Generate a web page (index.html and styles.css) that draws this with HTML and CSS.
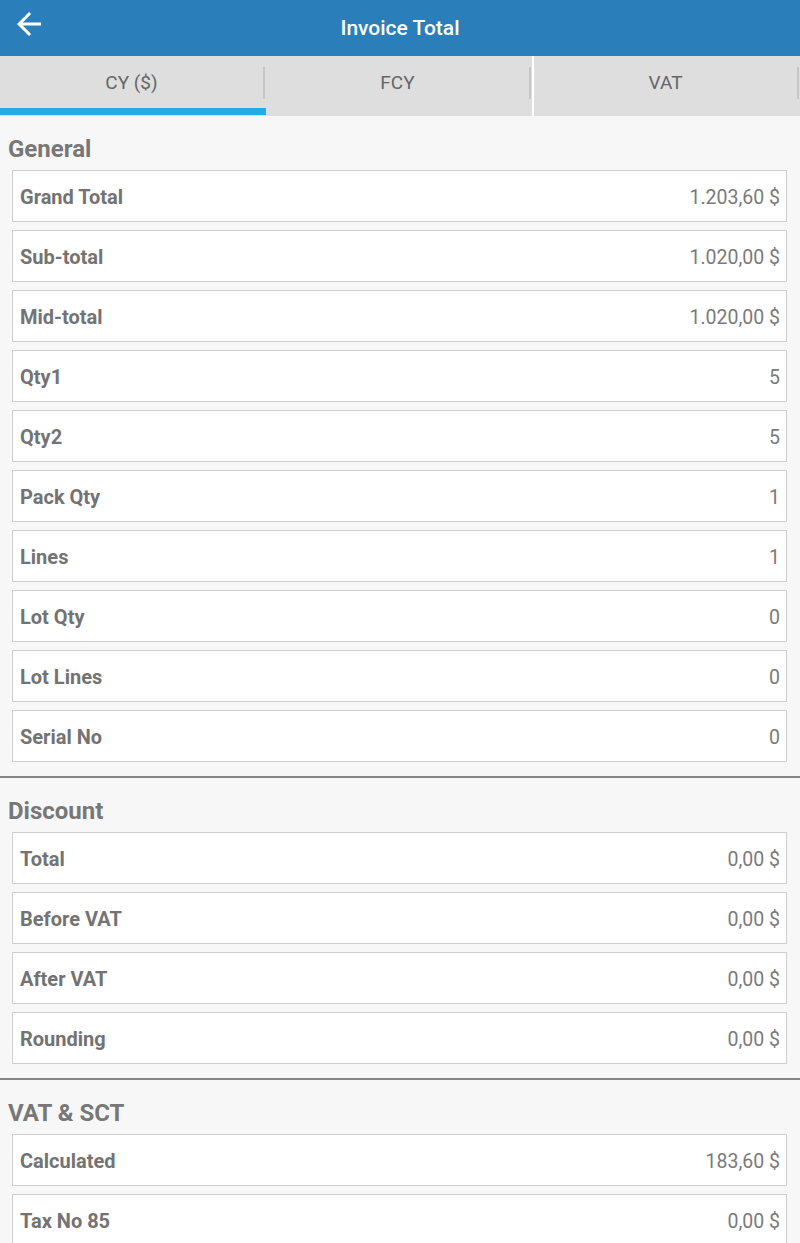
FILE: index.html
```html
<!DOCTYPE html>
<html lang="en">
<head>
<meta charset="utf-8">
<title>Invoice Total</title>
<link rel="stylesheet" href="styles.css">
</head>
<body>
<header class="appbar">
  <svg class="back" viewBox="0 0 24 24" width="36" height="36" aria-hidden="true"><path d="M20 11H7.83l5.59-5.59L12 4l-8 8 8 8 1.41-1.41L7.83 13H20v-2z" fill="#fff"/></svg>
  <h1 class="title">Invoice Total</h1>
</header>
<nav class="tabs">
  <div class="tab active"><div class="tab-body"><span class="tab-label">CY ($)</span><span class="tab-sep"></span></div><div class="tab-ind"></div></div>
  <div class="tab"><div class="tab-body"><span class="tab-label">FCY</span><span class="tab-sep"></span></div><div class="tab-ind"></div></div>
  <div class="tab last"><div class="tab-body"><span class="tab-label">VAT</span><span class="tab-sep"></span></div><div class="tab-ind"></div></div>
</nav>
<main class="content">
  <section class="section">
    <h2 class="section-title">General</h2>
    <div class="rows">
      <div class="row"><span class="label">Grand Total</span><span class="value">1.203,60 $</span></div>
      <div class="row"><span class="label">Sub-total</span><span class="value">1.020,00 $</span></div>
      <div class="row"><span class="label">Mid-total</span><span class="value">1.020,00 $</span></div>
      <div class="row"><span class="label">Qty1</span><span class="value">5</span></div>
      <div class="row"><span class="label">Qty2</span><span class="value">5</span></div>
      <div class="row"><span class="label">Pack Qty</span><span class="value">1</span></div>
      <div class="row"><span class="label">Lines</span><span class="value">1</span></div>
      <div class="row"><span class="label">Lot Qty</span><span class="value">0</span></div>
      <div class="row"><span class="label">Lot Lines</span><span class="value">0</span></div>
      <div class="row"><span class="label">Serial No</span><span class="value">0</span></div>
    </div>
  </section>
  <section class="section">
    <h2 class="section-title">Discount</h2>
    <div class="rows">
      <div class="row"><span class="label">Total</span><span class="value">0,00 $</span></div>
      <div class="row"><span class="label">Before VAT</span><span class="value">0,00 $</span></div>
      <div class="row"><span class="label">After VAT</span><span class="value">0,00 $</span></div>
      <div class="row"><span class="label">Rounding</span><span class="value">0,00 $</span></div>
    </div>
  </section>
  <section class="section open">
    <h2 class="section-title">VAT &amp; SCT</h2>
    <div class="rows">
      <div class="row"><span class="label">Calculated</span><span class="value">183,60 $</span></div>
      <div class="row"><span class="label">Tax No 85</span><span class="value">0,00 $</span></div>
    </div>
  </section>
</main>
</body>
</html>
```
FILE: styles.css
```css
html, body {
  margin: 0;
  padding: 0;
}
body {
  font-family: Roboto, "Liberation Sans", sans-serif;
  background: #f7f7f7;
  width: 800px;
  height: 1243px;
  overflow: hidden;
}
.appbar {
  height: 56px;
  background: #2a7eba;
  display: flex;
  align-items: center;
  justify-content: center;
  position: relative;
}
.back {
  position: absolute;
  left: 11px;
  top: 6px;
}
.title {
  margin: 0;
  color: #fff;
  font-size: 21px;
  font-weight: 500;
  line-height: 54px;
}
.tabs {
  display: flex;
  height: 60px;
  background: #dedede;
}
.tab {
  flex: 1;
  display: flex;
  flex-direction: column;
}
.tab.last {
  border-left: 2px solid #ffffff;
}
.tab-body {
  height: 52px;
  display: flex;
  align-items: center;
}
.tab-label {
  flex: 1;
  text-align: center;
  font-size: 19px;
  color: #666666;
}
.tab-sep {
  width: 2px;
  height: 32px;
  margin-right: 1px;
  margin-top: 2px;
  background: #c6c6c6;
}
.tab-ind {
  height: 7px;
  margin-bottom: 1px;
}
.tab.active .tab-ind {
  background: #29abe2;
}
.content {
  display: flex;
  flex-direction: column;
}
.section {
  padding-bottom: 14px;
  border-bottom: 2px solid #858585;
}
.section.open {
  border-bottom: none;
}
.section-title {
  margin: 0;
  padding: 19px 0 7px 8px;
  height: 28px;
  line-height: 28px;
  font-size: 24px;
  font-weight: 700;
  color: #777777;
}
.rows {
  display: flex;
  flex-direction: column;
  gap: 8px;
  margin: 0 13px 0 12px;
}
.row {
  height: 48px;
  padding: 2px 6px 0 7px;
  border: 1px solid #cfcfcf;
  background: #ffffff;
  display: flex;
  align-items: center;
  justify-content: space-between;
}
.label {
  font-size: 20px;
  font-weight: 700;
  color: #737373;
}
.value {
  font-size: 19.5px;
  color: #7a7a7a;
}
```
